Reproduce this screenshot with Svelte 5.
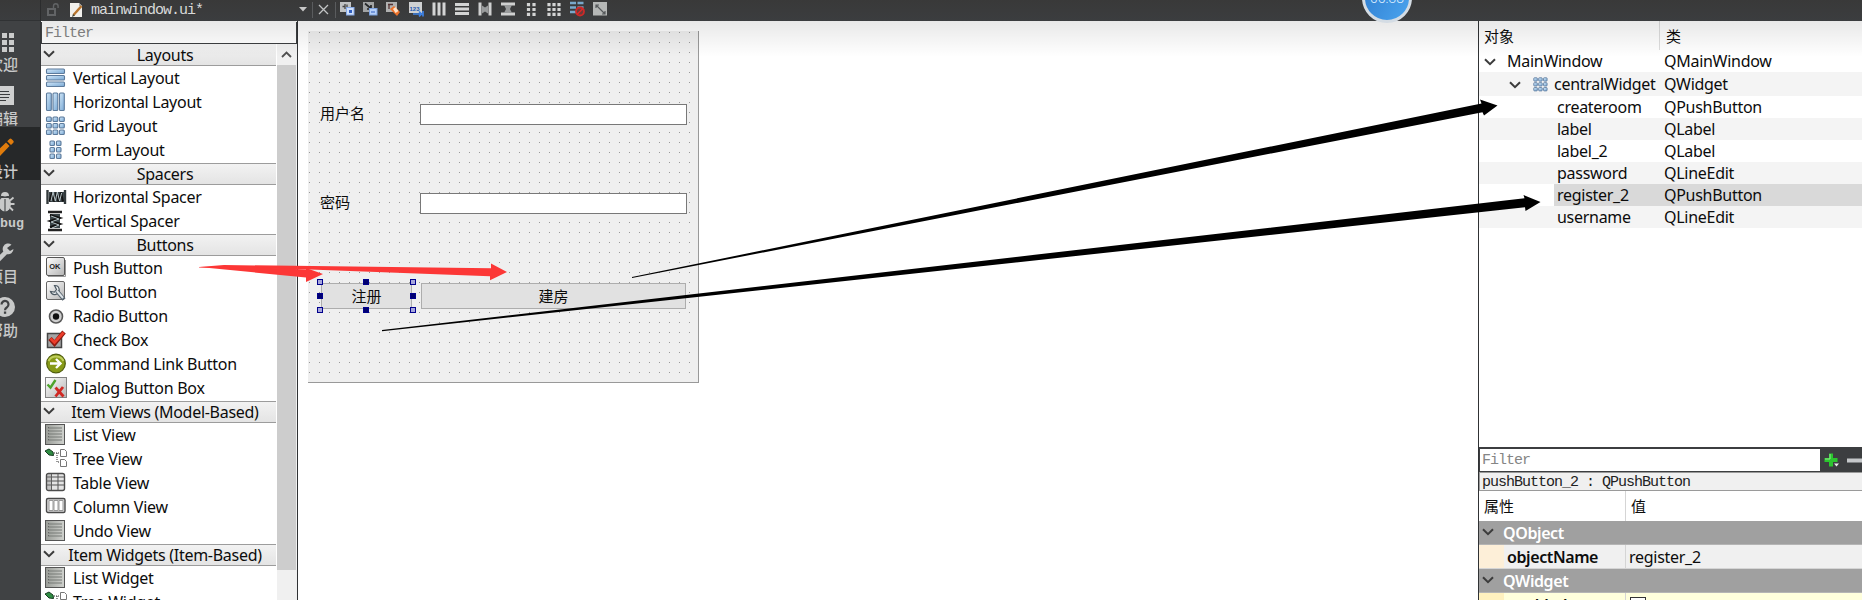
<script>
  const sections = [
    { title: 'Layouts', items: [['vlay', 'Vertical Layout'], ['hlay', 'Horizontal Layout'], ['grid', 'Grid Layout'], ['form', 'Form Layout']] },
    { title: 'Spacers', items: [['hsp', 'Horizontal Spacer'], ['vsp', 'Vertical Spacer']] },
    { title: 'Buttons', items: [['push', 'Push Button'], ['tool', 'Tool Button'], ['radio', 'Radio Button'], ['check', 'Check Box'], ['cmd', 'Command Link Button'], ['dlg', 'Dialog Button Box']] },
    { title: 'Item Views (Model-Based)', items: [['list', 'List View'], ['tree', 'Tree View'], ['table', 'Table View'], ['column', 'Column View'], ['list', 'Undo View']] },
    { title: 'Item Widgets (Item-Based)', items: [['list', 'List Widget'], ['tree', 'Tree Widget']] }
  ];
  const objects = [
    ['createroom', 'QPushButton'],
    ['label', 'QLabel'],
    ['label_2', 'QLabel'],
    ['password', 'QLineEdit'],
    ['register_2', 'QPushButton'],
    ['username', 'QLineEdit']
  ];
  const tools = ['widgets', 'signals', 'buddies', 'taborder', 'h', 'v', 'hs', 'vs', 'formlay', 'gridlay', 'break', 'adjust'];
  const modes = [['welcome', '欢迎'], ['editor', '编辑'], ['design', '设计'], ['debug', 'Debug'], ['project', '项目'], ['help', '帮助']];
  const handles = ['tl', 'tc', 'tr', 'ml', 'mr', 'bl', 'bc', 'br'];
</script>

{#snippet chevron()}
  <svg class="chev" width="12" height="8" viewBox="0 0 12 8"><path d="M1 1.2L6 6.2L11 1.2" fill="none" stroke="#3c3c3c" stroke-width="2" /></svg>
{/snippet}

{#snippet cells(xs, ys, w, h)}
  {#each ys as y}
    {#each xs as x}
      <rect {x} {y} width={w} height={h} rx="1" fill="url(#blue)" stroke="#5c7a9b" stroke-width="1.1" />
    {/each}
  {/each}
{/snippet}

<svg class="defs" width="0" height="0">
  <defs>
    <linearGradient id="blue" x1="0" y1="0" x2="1" y2="1"><stop offset="0" stop-color="#d3e8f9" /><stop offset="1" stop-color="#78a8d4" /></linearGradient>
    <linearGradient id="grey" x1="0" y1="0" x2="1" y2="1"><stop offset="0" stop-color="#fff" /><stop offset="1" stop-color="#b4b4b4" /></linearGradient>
    <linearGradient id="dim" x1="0" y1="0" x2="1" y2="0"><stop offset="0" stop-color="#9a9d98" /><stop offset="1" stop-color="#d0d2ce" /></linearGradient>
  </defs>
</svg>

<div class="window">
  <header class="topbar">
    <div class="corner"></div>
    <svg class="lock" width="14" height="14" viewBox="0 0 14 14"><rect x="2" y="6" width="7" height="6" fill="none" stroke="#626466" stroke-width="2" /><path d="M7.500 6V3a2.300 2.300 0 0 1 4.600 0v2" fill="none" stroke="#626466" stroke-width="1.400" /></svg>
    <svg class="doc" width="15" height="16" viewBox="0 0 15 16"><path d="M1 1h9l3 3v11H1z" fill="#f1f0ec" /><path d="M10 1v3h3z" fill="#aaa" /><path d="M4.500 13L12.500 4" stroke="#b8742c" stroke-width="2.400" /><path d="M3 15l1-3 2 1.500z" fill="#443" /></svg>
    <span class="mono file">mainwindow.ui*</span>
    <svg class="drop" width="8" height="5"><path d="M0 0h8L4 4.500z" fill="#c8c8c8" /></svg>
    <i class="sep"></i>
    <svg class="close" width="11" height="11"><path d="M1 1l9 9M10 1l-9 9" stroke="#c2c4c5" stroke-width="1.300" /></svg>
    <i class="sep"></i>
    <div class="tools">
      {#each tools as t}
        <svg width="16" height="16" viewBox="0 0 16 16">
          {#if t === 'widgets'}
            <rect x="1" y="1" width="11" height="10" fill="#c0c2c3" /><path d="M6 3v5M3.500 5.500h3M8 3.500v3" stroke="#444" stroke-width="1.300" /><rect x="7.500" y="6.500" width="7.500" height="7.500" fill="#cfe0fb" stroke="#86a9e6" /><rect x="10" y="9" width="3" height="3" fill="#315fc0" />
          {:else if t === 'signals'}
            <rect x="1" y="1" width="11" height="10" fill="#a2a4a5" /><path d="M3 2.500l6 5M9 4v4H5" stroke="#252729" stroke-width="1.700" fill="none" /><rect x="7.500" y="7.500" width="7.500" height="6.500" fill="#b5cff8" stroke="#7ba1df" /><path d="M9 11h4" stroke="#315fc0" />
          {:else if t === 'buddies'}
            <rect x="1" y="1" width="11" height="10" fill="#b0b1b1" /><path d="M3 3.500h5M4 3v5" stroke="#533" stroke-width="1.300" /><path d="M5 8l4-3 6 6-3 4z" fill="#ee7128" /><path d="M8 8l2.500-2 3 4-3 2z" fill="#ffe2c8" />
          {:else if t === 'taborder'}
            <rect x="1" y="1" width="13" height="11" fill="#cfd1d2" /><text x="1.500" y="9.500" class="nums">123</text><path d="M5 13h8M11 10.500l2.500 2.500-2.500 2.300M15 10v5.500" stroke="#3e82e6" stroke-width="1.700" fill="none" />
          {:else if t === 'h'}
            <path d="M3 1.500v13M8 1.500v13M13 1.500v13" stroke="#d3d4d4" stroke-width="3" />
          {:else if t === 'v'}
            <path d="M1 3.500h14M1 8h14M1 12.500h14" stroke="#d3d4d4" stroke-width="3" />
          {:else if t === 'hs'}
            <path d="M3 1.500v13M13 1.500v13" stroke="#cfd0d0" stroke-width="3" /><path d="M5 4.500l3 2 3-2v8l-3-2-3 2z" fill="#999b9c" />
          {:else if t === 'vs'}
            <path d="M1 3h14M1 13h14" stroke="#cfd0d0" stroke-width="3" /><path d="M4 4h8l-2 4 2 4H4l2-4z" fill="#999b9c" />
          {:else if t === 'formlay'}
            <path d="M5.500 2v13M11 2v13" stroke="#d3d4d4" stroke-width="3.200" stroke-dasharray="3.200 1.700" />
          {:else if t === 'gridlay'}
            <path d="M3 2v13M8 2v13M13 2v13" stroke="#d3d4d4" stroke-width="3.200" stroke-dasharray="3.200 1.700" />
          {:else if t === 'break'}
            <path d="M1 2h6M8.500 2h6M1 6.500h6M8.500 6.500h6M1 11h6" stroke="#78a8ca" stroke-width="2.500" /><circle cx="11" cy="10.500" r="4" fill="#6d3a3a" stroke="#cf2928" stroke-width="1.800" /><path d="M8 13.500l6-6" stroke="#df2928" stroke-width="1.500" />
          {:else}
            <rect x="1" y="1" width="14" height="13.500" fill="#b5b7b6" /><path d="M4 4l9 9M4 7V4h3M13 10v3h-3" stroke="#55585a" stroke-width="1.200" fill="none" />
          {/if}
        </svg>
      {/each}
    </div>
    <div class="clock">06:38</div>
  </header>

  <div class="main">
    <nav class="modes">
      {#each modes as [id, name]}
        <div class="mode {id}">
          <svg width="22" height="22" viewBox="0 0 22 22">
            {#if id === 'welcome'}
              <path d="M4.500 3v19M11.500 3v19M18.500 3v19" stroke="#cacbcb" stroke-width="5" stroke-dasharray="5 2" />
            {:else if id === 'editor'}
              <rect x="1" y="2" width="20" height="19" fill="#cfd0d0" /><path d="M4 7.500h12M4 10.500h13M4 13.500h12M4 16.500h9" stroke="#3a3c3e" stroke-width="1.200" />
            {:else if id === 'design'}
              <path d="M0 22l2-6L13 5.500l3.500 3.500L6 20z M14.200 4.300l2.300-2.300q1-.8 2 0l1.800 1.800q.8 1 0 2L18 8z" fill="#e07c0c" />
            {:else if id === 'debug'}
              <path d="M8 5a3.600 3.600 0 0 1 8 0z" fill="#c8c9c9" /><path d="M3 7l4 2M20.500 6.500l-3.500 3M2 13h4M21.500 13H17M4 19.500l3-3M20 19.500l-3-3" stroke="#c8c9c9" stroke-width="1.800" fill="none" /><ellipse cx="12" cy="13" rx="6" ry="7.500" fill="#c8c9c9" /><path d="M12 8v13M6 6.500h12" stroke="#404244" stroke-width="1.100" />
            {:else if id === 'project'}
              <path d="M2 21L13 10" stroke="#c8c9c9" stroke-width="4.500" /><path d="M18.500 2.700A5.400 5.400 0 1 0 20.500 7l-3.500 2-3-3z" fill="#c8c9c9" />
            {:else}
              <circle cx="12" cy="12" r="10" fill="#c8c9c9" /><path d="M8.500 9.500a3.500 3.500 0 1 1 5.500 2.800c-1.600 1-2 1.500-2 3" fill="none" stroke="#404244" stroke-width="2.200" /><rect x="10.900" y="16.500" width="2.300" height="2.300" fill="#404244" />
            {/if}
          </svg>
          <span>{name}</span>
        </div>
      {/each}
    </nav>

    <aside class="box">
      <div class="filter mono">Filter</div>
      <div class="boxbody">
        <div class="boxlist">
          {#each sections as s}
            <section>
              <div class="head">{@render chevron()}<span>{s.title}</span></div>
              {#each s.items as [icon, name]}
                <div class="item">
                  <svg width="22" height="22" viewBox="0 0 22 22">
                    {#if icon === 'vlay'}
                      {@render cells([1.5], [2, 8.500, 15], 18, 4.5)}
                    {:else if icon === 'hlay'}
                      {@render cells([1.5, 8, 14.5], [2], 4.800, 17.5)}
                    {:else if icon === 'grid'}
                      {@render cells([1.5, 8, 14.5], [2, 8.500, 15], 4.800, 4.5)}
                    {:else if icon === 'form'}
                      {@render cells([5, 11.5], [2, 8.500, 15], 4.5, 4.5)}
                    {:else if icon === 'hsp'}
                      <path d="M2.500 4v14M20 4v14" stroke="#333a3c" stroke-width="2.400" /><path d="M4 6h15v10H4z" fill="#3a4448" /><path d="M4.500 15.500l2.500-9 2 9 2.500-9 2 9 2.500-9 2 9" fill="none" stroke="#151515" stroke-width="2" /><path d="M6 15l2-9 2.300 9 2-9 2.300 9 2-8" fill="none" stroke="#b5c3c7" stroke-width="1" />
                    {:else if icon === 'vsp'}
                      <path d="M3 2h14M3 20h14" stroke="#222" stroke-width="2.400" /><path d="M5 4h10v14H5z" fill="#3a4448" /><path d="M5 5l10 3-10 3 10 3-10 3" fill="none" stroke="#111" stroke-width="2" /><path d="M6 6l8 3-8 3 8 3-7 3" fill="none" stroke="#b5c3c7" stroke-width="1" />
                    {:else if icon === 'push'}
                      <rect x="1.500" y=".5" width="18" height="18" rx="1.500" fill="url(#grey)" stroke="#555" /><path d="M3 19.500h17.500V3" fill="none" stroke="#999" /><text x="4.200" y="12" class="ok">OK</text>
                    {:else if icon === 'tool'}
                      <rect x="1.500" y=".5" width="18" height="18" rx="1.500" fill="url(#grey)" stroke="#666" /><path d="M9.500 4.500a4.500 4.500 0 1 1-4 6l4 .5 2-2.500z" fill="#eceff1" stroke="#4c5963" stroke-width="1.200" /><path d="M12 10l7 8.500" stroke="#586570" stroke-width="4" /><path d="M12 10l6 7" stroke="#dde3e7" stroke-width="2" />
                    {:else if icon === 'radio'}
                      <circle cx="11" cy="11.500" r="6.500" fill="#d0d0d0" stroke="#585858" stroke-width="1.600" /><circle cx="11" cy="11.500" r="3.200" fill="#101010" />
                    {:else if icon === 'check'}
                      <rect x="2.500" y="4.500" width="14" height="14" fill="#a5a5a5" stroke="#454545" stroke-width="1.500" /><path d="M5 9.500l4.500 5L19 3" fill="none" stroke="#8e1a10" stroke-width="4.600" /><path d="M5.500 9.500l4 4L18.500 3.500" fill="none" stroke="#ec3d2b" stroke-width="2.800" />
                    {:else if icon === 'cmd'}
                      <circle cx="11" cy="10.500" r="9.300" fill="#879a18" stroke="#4f5d0b" stroke-width="1.200" /><path d="M3.500 8a8 7 0 0 1 15 0" stroke="#c0cf5b" stroke-width="2" fill="none" /><path d="M5 10.500h10M11 6l4.500 4.500-4.500 4.500" stroke="#fff" stroke-width="2.400" fill="none" />
                    {:else if icon === 'dlg'}
                      <rect x=".5" y=".5" width="21" height="20" fill="url(#grey)" stroke="#828282" /><path d="M2.500 7.500l3 3L10.500 3" stroke="#4da32c" stroke-width="2.400" fill="none" /><path d="M10.500 10.500l8 9M18 10l-7.500 9.500" stroke="#d02722" stroke-width="2.800" />
                    {:else if icon === 'list'}
                      <rect x=".5" y=".5" width="19" height="20" fill="url(#dim)" stroke="#555" /><path d="M3 4h14M3 7h14M3 10h14M3 13h14M3 16h14" stroke="#777a76" stroke-width="1" /><path d="M3.500 3v15" stroke="#666" stroke-dasharray="1 2" />
                    {:else if icon === 'tree'}
                      <path d="M0 3l4-2 4 3 .5 3.500L4 7z" fill="#2f8d43" stroke="#163b20" /><path d="M9 5h6M12 5v9h3" stroke="#333" stroke-dasharray="1 1" fill="none" /><path d="M15.500 1.500h4l2 2v5h-6zM15.500 11.500h4l2 2v5h-6z" fill="#fff" stroke="#777" />
                    {:else if icon === 'table'}
                      <rect x="1.500" y="1.500" width="18" height="17" rx="2" fill="#e4e4e4" stroke="#4c4c4c" stroke-width="1.400" /><path d="M2 5h17M2 9h17M2 13h17M6.500 2v16M13 2v16" stroke="#555" /><path d="M2 2h5v16H2z" fill="#777" opacity=".3" />
                    {:else if icon === 'column'}
                      <rect x="1.500" y="2.500" width="18.500" height="14" rx="1.500" fill="#dadada" stroke="#4a4a4a" stroke-width="1.400" /><path d="M4 4.500h4v10H4zM9 4.500h4v10H9zM14 4.500h4v10h-4z" fill="#fff" stroke="#999" />
                    {/if}
                  </svg>
                  <span>{name}</span>
                </div>
              {/each}
            </section>
          {/each}
        </div>
        <div class="scroll">
          <svg width="19" height="21"><path d="M5 13l4.500-4.500L14 13" fill="none" stroke="#505050" stroke-width="1.800" /></svg>
          <div class="thumb"></div>
        </div>
      </div>
    </aside>

    <div class="canvas">
      <div class="formwin">
        <div class="lb user">用户名</div><div class="edit user"></div>
        <div class="lb pass">密码</div><div class="edit pass"></div>
        <div class="btn reg">注册{#each handles as h}<i class="handle {h}"></i>{/each}</div>
        <div class="btn room">建房</div>
      </div>
    </div>

    <aside class="right">
      <div class="objects">
        <div class="orow ohead"><span class="c1">对象</span><span class="c2">类</span></div>
        <div class="orow top"><span class="c1">{@render chevron()}MainWindow</span><span class="c2">QMainWindow</span></div>
        <div class="orow central"><span class="c1">{@render chevron()}<svg class="gi" width="15" height="15" viewBox=".5 1 20 20">{@render cells([1.5, 8, 14.5], [2, 8.500, 15], 4.800, 4.5)}</svg>centralWidget</span><span class="c2">QWidget</span></div>
        {#each objects as [n, c]}
          <div class="orow child" class:sel={n === 'register_2'}><span class="c1"><b>{n}</b></span><span class="c2">{c}</span></div>
        {/each}
      </div>
      <div class="pbar">
        <div class="pfilter mono">Filter</div>
        <svg width="42" height="23"><path d="M11 4.500v13M4.500 11h13" stroke="#2bc52e" stroke-width="4" /><path d="M10 5v5H5" stroke="#8df08b" fill="none" /><path d="M14 14.500h5l-2.500 3z" fill="#eee" /><path d="M27 11.500h15" stroke="#c5c8ca" stroke-width="4" /></svg>
      </div>
      <div class="pname mono">pushButton_2 : QPushButton</div>
      <div class="prow phead"><span class="p1">属性</span><span class="p2">值</span></div>
      <div class="group">{@render chevron()}QObject</div>
      <div class="prow obj"><span class="p1">objectName</span><span class="p2">register_2</span></div>
      <div class="group">{@render chevron()}QWidget</div>
      <div class="prow enabled"><span class="p1">enabled</span><span class="p2"><i class="cb"></i></span></div>
    </aside>
  </div>

  <div class="shade"></div>
  <svg class="arrows" width="1862" height="600" viewBox="0 0 1862 600">
    <path d="M199 267L224 265L491 268.300V263.500L507 272L490 280.300V276.200L310 269.500L199 267.600Z" fill="#fc3736" />
    <path d="M199 267L240 266.500L306 269.500V268L323 274L306 282V277.500Z" fill="#fc3736" />
    <path d="M632 277L1481.500 103.500L1480 99.500L1497.500 105.500L1484 115.500L1482.500 112.200L632 278Z" fill="#000" />
    <path d="M382 330L1524.500 198.300L1523.500 195L1540.500 202L1525.500 211L1525 207.300L382 331.200Z" fill="#000" />
  </svg>
</div>

<style>
  :global(body) { background: #fff; overflow: hidden; }
  .window { position: relative; width: 1862px; height: 600px; overflow: hidden; display: flex; flex-direction: column; font: 16px/22px "Noto Sans", "Noto Sans CJK SC", sans-serif; letter-spacing: -0.28px; color: #0c0c0c; }
  .window, .window * { box-sizing: border-box; }
  svg { display: block; flex: none; }
  .defs { position: absolute; }
  .mono { font-family: "Liberation Mono", monospace; font-size: 15px; letter-spacing: -1px; white-space: pre; }
  .topbar { height: 21px; flex: none; display: flex; background: linear-gradient(#393939, #3b3d3f); }
  .corner { width: 41px; border-right: 1px solid #2b2c2d; border-bottom: 1px solid #303234; margin-right: 5px; }
  .lock { margin-top: 3px; }
  .doc { margin: 2px 0 0 9px; }
  .file { width: 209px; margin-left: 7px; margin-right: -1px; line-height: 21px; color: #d8d9d9; }
  .drop { margin-top: 7px; margin-right: 5px; }
  .sep { width: 1px; height: 16px; margin-top: 2px; background: #5a5c5e; }
  .close { margin: 4px 6px 0 5px; }
  .tools { display: flex; gap: 7px; margin: 1px 0 0 3px; }
  .nums { font: bold 6px "Liberation Sans", sans-serif; fill: #2058b0; letter-spacing: 0; }
  .clock { position: absolute; left: 1362px; top: -27px; width: 50px; height: 50px; border-radius: 50%; border: 3px solid #d4dce4; background: linear-gradient(120deg, #2f7ccf, #4aa4ee); color: #dff0ff; font: 300 14px/45px Roboto, sans-serif; letter-spacing: 0; text-align: center; z-index: 4; }
  .main { flex: 1; display: flex; min-height: 0; }
  .modes { width: 41px; flex: none; background: #404244; overflow: hidden; }
  .mode { height: 53px; padding-top: 9px; width: 41px; border-right: 1px solid #343638; }
  .mode svg { margin-left: -7px; }
  .mode span { display: flex; justify-content: center; width: 60px; margin-left: -27px; font: 500 15px/20px "Noto Sans CJK SC", sans-serif; letter-spacing: 0; color: #c9caca; margin-top: 2px; }
  .mode.editor { padding-top: 10px; }
  .mode.design { background: #262829; padding-top: 10px; }
  .mode.debug { padding-top: 11px; }
  .mode.debug span { font: bold 13.300px/20px "Liberation Mono", monospace; margin-left: -26px; margin-top: 1px; }
  .mode.help span { margin-top: 3px; }
  .box { width: 257px; flex: none; display: flex; flex-direction: column; border-right: 1px solid #303234; padding: 1px 0 0; }
  .filter { height: 22px; border: 1px solid #3c3e40; border-top: 0; line-height: 24px; padding-left: 3px; color: #858585; background: #fff; flex: none; }
  .boxbody { flex: 1; display: flex; min-height: 0; overflow: hidden; }
  .boxlist { width: 235px; }
  section { padding-bottom: 1px; }
  .head { height: 22px; border-top: 1px solid #9c9c9c; border-bottom: 1px solid #9c9c9c; background: linear-gradient(#f2f2f2, #e4e4e4); display: flex; line-height: 20px; }
  section:first-child .head { border-top-color: #f2f2f2; }
  .head .chev { margin: 5px 0 0 2px; }
  .head span { flex: 1; text-align: center; padding-right: 1px; }
  .item { height: 24px; display: flex; line-height: 24px; white-space: nowrap; }
  .item svg { margin: 1px 6px 0 4px; }
  .ok { font: bold 7.500px "Liberation Sans", sans-serif; letter-spacing: 0; fill: #222; }
  .scroll { width: 20px; background: #f0f0f0; margin-left: 1px; }
  .thumb { height: 505px; background: #cdcdcd; width: 19px; }
  .canvas { width: 1180px; flex: none; padding: 10px 0 0 10px; }
  .formwin { position: relative; width: 391px; height: 352px; border-right: 1px solid #999; border-bottom: 1px solid #999; background: radial-gradient(circle at .5px .5px, #999 .6px, #efefef .7px) 1px 1px / 10px 10px; font: 15px/20px "Noto Sans CJK SC", sans-serif; letter-spacing: 0; }
  .lb { position: absolute; left: 12px; }
  .lb.user { top: 72px; }
  .lb.pass { top: 161px; }
  .edit { position: absolute; left: 112px; width: 267px; height: 21px; background: #fff; border: 1px solid #787878; }
  .edit.user { top: 73px; }
  .edit.pass { top: 162px; }
  .btn { position: absolute; top: 252px; height: 26px; background: #e1e1e1; border: 1px solid #adadad; text-align: center; line-height: 23px; }
  .reg { left: 13px; width: 91px; }
  .room { left: 113px; width: 265px; }
  .handle { position: absolute; width: 6px; height: 6px; background: #000070; border: 1px solid #00008c; }
  .tl, .tr, .bl, .br { background: #a6a6dc; }
  .tl, .tc, .tr { top: -5px; }
  .ml, .mr { top: 9px; }
  .bl, .bc, .br { top: 23px; }
  .tl, .ml, .bl { left: -5px; }
  .tc, .bc { left: 41px; }
  .tr, .mr, .br { left: 88px; }
  .right { flex: 1; border-left: 1px solid #303234; display: flex; flex-direction: column; }
  .objects { height: 426px; flex: none; }
  .orow { height: 22px; display: flex; }
  .c1 { width: 181px; display: flex; white-space: nowrap; }
  .c2 { padding-left: 4px; flex: 1; }
  .ohead { height: 29px; font: 15px/29px "Noto Sans CJK SC", sans-serif; letter-spacing: 0; }
  .ohead .c1 { padding-left: 5px; border-right: 1px solid #ddd; }
  .ohead .c2 { padding-left: 6px; }
  .top .chev { margin: 8px 11px 0 5px; }
  .central { height: 24px; line-height: 24px; background: #f4f4f4; }
  .central .chev { margin: 9px 12px 0 30px; }
  .gi { margin: 5px 6px 0 0; }
  .child:nth-child(odd) { background: #f4f4f4; }
  .child b { font-weight: 400; width: 106px; padding-left: 3px; margin-left: 75px; }
  .child.sel { background: linear-gradient(90deg, #fff 75px, #d9d9d9 75px); }
  .pbar { height: 25px; flex: none; background: #3c3e40; display: flex; padding-top: 2px; }
  .pfilter { width: 340px; height: 22px; margin-left: 1px; background: #fff; color: #858585; padding-left: 2px; line-height: 23px; }
  .pname { height: 19px; flex: none; background: #f0f0f0; border: 1px solid #9a9a9a; border-right: 0; line-height: 19px; padding-left: 2px; color: #222; }
  .prow { display: flex; height: 24px; flex: none; }
  .p1 { width: 147px; border-right: 1px solid #d5d5d5; }
  .p2 { flex: 1; padding-left: 3px; }
  .phead { height: 30px; font: 15px/30px "Noto Sans CJK SC", sans-serif; letter-spacing: 0; }
  .phead .p1 { padding-left: 5px; }
  .phead .p2 { padding-left: 5px; }
  .group { height: 24px; flex: none; background: #a0a0a0; display: flex; color: #fff; font-weight: 600; line-height: 24px; border-bottom: 1px solid #b5b5b5; letter-spacing: -0.4px; }
  .group .chev { margin: 7px 9px 0 3px; }
  .obj { background: linear-gradient(90deg, #fdefd8 25px, #f0f0f0 25px); line-height: 24px; border-bottom: 1px solid #d5d5d5; }
  .obj .p1, .enabled .p1 { padding-left: 28px; font-weight: 600; letter-spacing: -0.4px; }
  .enabled { background: linear-gradient(90deg, #fff1bf 25px, #ffffdc 25px); line-height: 24px; }
  .cb { display: block; width: 16px; height: 16px; margin: 4px 0 0 1px; border: 1px solid #333; background: #fff; }
  .shade { position: absolute; left: 42px; right: 0; top: 21px; height: 36px; background: linear-gradient(rgba(0, 0, 0, .09), rgba(0, 0, 0, 0)); pointer-events: none; }
  .arrows { position: absolute; left: 0; top: 0; z-index: 3; pointer-events: none; }
</style>
